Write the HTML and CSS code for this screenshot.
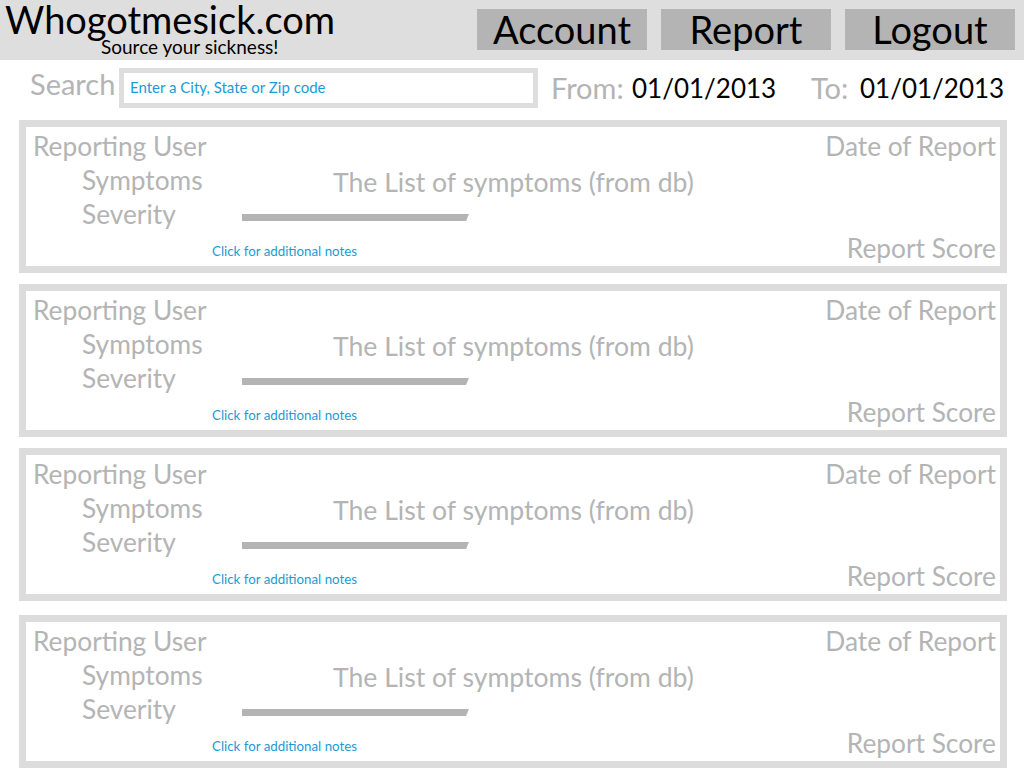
FILE: index.html
```html
<!DOCTYPE html>
<html>
<head>
<meta charset="utf-8">
<link rel="stylesheet" href="styles.css">
</head>
<body>
<header class="topbar">
  <div class="brand">
    <div class="brand-name">Whogotmesick.com</div>
    <div class="brand-tag">Source your sickness!</div>
  </div>
  <nav class="nav">
    <a class="nav-btn">Account</a>
    <a class="nav-btn">Report</a>
    <a class="nav-btn">Logout</a>
  </nav>
</header>

<section class="filters">
  <span class="search-label">Search</span>
  <div class="search-box">Enter a City, State or Zip code</div>
  <span class="filter-label from-label">From:</span>
  <span class="filter-date">01/01/2013</span>
  <span class="filter-label to-label">To:</span>
  <span class="filter-date">01/01/2013</span>
</section>

<main class="reports">
  <article class="card">
    <div class="lbl lbl-user">Reporting User</div>
    <div class="lbl lbl-sub lbl-sym">Symptoms</div>
    <div class="lbl lbl-sub lbl-sev">Severity</div>
    <div class="sym-list">The List of symptoms (from db)</div>
    <div class="sev-bar"></div>
    <a class="notes">Click for additional notes</a>
    <div class="lbl date">Date of Report</div>
    <div class="lbl score">Report Score</div>
  </article>
  <article class="card">
    <div class="lbl lbl-user">Reporting User</div>
    <div class="lbl lbl-sub lbl-sym">Symptoms</div>
    <div class="lbl lbl-sub lbl-sev">Severity</div>
    <div class="sym-list">The List of symptoms (from db)</div>
    <div class="sev-bar"></div>
    <a class="notes">Click for additional notes</a>
    <div class="lbl date">Date of Report</div>
    <div class="lbl score">Report Score</div>
  </article>
  <article class="card">
    <div class="lbl lbl-user">Reporting User</div>
    <div class="lbl lbl-sub lbl-sym">Symptoms</div>
    <div class="lbl lbl-sub lbl-sev">Severity</div>
    <div class="sym-list">The List of symptoms (from db)</div>
    <div class="sev-bar"></div>
    <a class="notes">Click for additional notes</a>
    <div class="lbl date">Date of Report</div>
    <div class="lbl score">Report Score</div>
  </article>
  <article class="card card-last">
    <div class="lbl lbl-user">Reporting User</div>
    <div class="lbl lbl-sub lbl-sym">Symptoms</div>
    <div class="lbl lbl-sub lbl-sev">Severity</div>
    <div class="sym-list">The List of symptoms (from db)</div>
    <div class="sev-bar"></div>
    <a class="notes">Click for additional notes</a>
    <div class="lbl date">Date of Report</div>
    <div class="lbl score">Report Score</div>
  </article>
</main>
</body>
</html>
```

FILE: styles.css
```css
* { box-sizing: border-box; }
html, body { margin: 0; padding: 0; background: #ffffff; }
body {
  font-family: Lato, "Open Sans", "Liberation Sans", sans-serif;
  color: #000;
  width: 1024px;
  height: 768px;
  overflow: hidden;
}

.topbar {
  height: 60px;
  background: #dedede;
  display: flex;
  justify-content: space-between;
  align-items: flex-start;
}
.brand { padding-left: 5px; padding-top: 1px; }
.brand-name {
  font-size: 38px;
  line-height: 37px;
  color: #000;
  white-space: nowrap;
}
.brand-tag {
  font-size: 19px;
  line-height: 16px;
  margin-top: 1px;
  margin-left: 96px;
  color: #000;
  white-space: nowrap;
}
.nav {
  display: flex;
  gap: 14px;
  padding: 9px 9px 0 0;
}
.nav-btn {
  width: 170px;
  height: 41px;
  background: #b4b4b4;
  color: #000;
  font-size: 38px;
  line-height: 41px;
  text-align: center;
}

.filters {
  display: flex;
  align-items: flex-start;
  margin-top: 8px;
  padding-left: 30px;
  height: 40px;
}
.filters > * { flex-shrink: 0; white-space: nowrap; }
.search-label {
  font-size: 29px;
  line-height: 32px;
  color: #b4b4b4;
  width: 89px;
}
.search-box {
  width: 419px;
  height: 40px;
  border: 5px solid #dedede;
  color: #1b9bd7;
  font-size: 15px;
  line-height: 28px;
  padding-left: 6px;
}
.filter-label {
  font-size: 29px;
  line-height: 40px;
  color: #b4b4b4;
}
.from-label { margin-left: 13px; width: 81px; }
.to-label { margin-left: 35px; width: 49px; }
.filter-date {
  width: 144px;
  font-size: 26px;
  line-height: 40px;
  color: #000;
}

.reports {
  display: flex;
  flex-direction: column;
  gap: 11px;
  margin-top: 12px;
  padding-left: 19px;
}
.card {
  width: 988px;
  height: 153px;
  flex-shrink: 0;
  border: 7px solid #dcdcdc;
  padding: 2px 4px 0 7px;
  display: grid;
  grid-template-columns: 179px 1fr auto;
  grid-template-rows: 34px 34px 34px 1fr;
}
.card-last { margin-top: 3px; }

.lbl {
  font-size: 26.3px;
  line-height: 34px;
  color: #b4b4b4;
  white-space: nowrap;
}
.lbl-user { grid-column: 1; grid-row: 1; }
.lbl-sym { grid-column: 1; grid-row: 2; }
.lbl-sev { grid-column: 1; grid-row: 3; }
.lbl-sub { padding-left: 49px; }
.date { grid-column: 3; grid-row: 1; text-align: right; }
.score { grid-column: 3; grid-row: 4; text-align: right; align-self: start; }

.sym-list {
  grid-column: 2;
  grid-row: 2;
  margin-left: 121px;
  padding-top: 2px;
  font-size: 26.6px;
  line-height: 34px;
  color: #b4b4b4;
  white-space: nowrap;
}
.sev-bar {
  grid-column: 2;
  grid-row: 3;
  align-self: start;
  margin-top: 17px;
  margin-left: 30px;
  width: 227px;
  height: 7px;
  background: #b4b4b4;
  clip-path: polygon(0 0, 100% 0, calc(100% - 3px) 100%, 0 100%);
}
.notes {
  grid-column: 2;
  grid-row: 4;
  align-self: start;
  margin-top: 12px;
  font-size: 13.3px;
  line-height: 17px;
  color: #1b9bd7;
  white-space: nowrap;
}
```
